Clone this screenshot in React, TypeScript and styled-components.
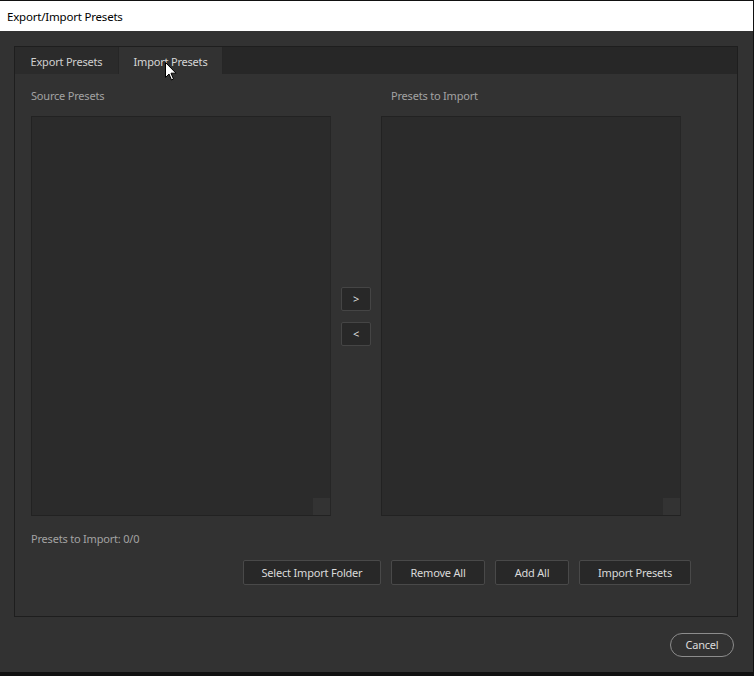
import React from "react";
import styled, { createGlobalStyle } from "styled-components";

const Global = createGlobalStyle`
  html, body { margin: 0; padding: 0; background: #000; }
  body { font-family: "Noto Sans", "Open Sans", sans-serif; }
  * { box-sizing: border-box; }
`;

const uiFont = `
  font-family: "Noto Sans", "Open Sans", sans-serif;
  font-size: 11px;
  letter-spacing: -0.2px;
`;

const Frame = styled.div`
  position: relative;
  width: 754px;
  height: 676px;
  background: #111;
  padding: 1px 1px 4px 0;
  display: flex;
  flex-direction: column;
  overflow: hidden;
`;

const TitleBar = styled.div`
  height: 30px;
  background: #ffffff;
  color: #000;
  ${uiFont}
  font-size: 11.5px;
  display: flex;
  align-items: center;
  padding-left: 7px;
  flex-shrink: 0;
`;

const Body = styled.div`
  flex: 1;
  background: #323232;
  padding: 15px 15px 0 14px;
  display: flex;
  flex-direction: column;
`;

const Panel = styled.div`
  width: 724px;
  height: 571px;
  border: 1px solid #1e1e1e;
  background: #323232;
  display: flex;
  flex-direction: column;
`;

const TabBar = styled.div`
  height: 27px;
  background: #272727;
  display: flex;
  flex-shrink: 0;
`;

const Tab = styled.div<{ $active?: boolean }>`
  width: 104px;
  height: 27px;
  display: flex;
  align-items: center;
  justify-content: center;
  padding-top: 1px;
  ${uiFont}
  color: ${(p) => (p.$active ? "#d6d6d6" : "#cfcfcf")};
  background: ${(p) => (p.$active ? "#323232" : "#2b2b2b")};
  border-right: 1px solid #262626;
`;

const Content = styled.div`
  flex: 1;
  padding: 14px 0 0 16px;
  display: flex;
  flex-direction: column;
`;

const Columns = styled.div`
  display: flex;
  align-items: flex-end;
`;

const Column = styled.div`
  width: 300px;
  display: flex;
  flex-direction: column;
  gap: 12px;
`;

const Label = styled.div<{ $indent?: number }>`
  height: 16px;
  line-height: 16px;
  ${uiFont}
  color: #a3a3a3;
  padding-left: ${(p) => p.$indent ?? 0}px;
`;

const ListBox = styled.div`
  position: relative;
  height: 400px;
  background: #2b2b2b;
  border: 1px solid #222;
  border-right-color: #262626;
`;

const ScrollCorner = styled.div`
  position: absolute;
  right: 0;
  bottom: 0;
  width: 17px;
  height: 17px;
  background: #333333;
`;

const Middle = styled.div`
  width: 50px;
  height: 400px;
  display: flex;
  flex-direction: column;
  align-items: center;
  justify-content: center;
  gap: 11px;
`;

const ArrowButton = styled.button`
  width: 30px;
  height: 24px;
  background: #282828;
  border: 1px solid #454545;
  border-radius: 2px;
  color: #dcdcdc;
  ${uiFont}
  padding: 0;
  display: flex;
  align-items: center;
  justify-content: center;
`;

const Status = styled.div`
  margin-top: 15px;
  height: 16px;
  line-height: 16px;
  ${uiFont}
  color: #a3a3a3;
`;

const ButtonRow = styled.div`
  margin-top: 13px;
  display: flex;
  justify-content: flex-end;
  gap: 10px;
  padding-right: 46px;
`;

const ActionButton = styled.button<{ $w: number }>`
  width: ${(p) => p.$w}px;
  height: 25px;
  background: #282828;
  border: 1px solid #494949;
  border-radius: 2px;
  color: #dadada;
  ${uiFont}
  padding: 0;
`;

const Footer = styled.div`
  display: flex;
  justify-content: flex-end;
  padding-top: 16px;
  padding-right: 4px;
`;

const PillButton = styled.button`
  width: 64px;
  height: 24px;
  background: #323232;
  border: 1px solid #8c8c8c;
  border-radius: 12px;
  color: #dcdcdc;
  ${uiFont}
  padding: 0 0 1px;
`;

const Cursor = styled.svg`
  position: absolute;
  left: 165px;
  top: 62px;
  pointer-events: none;
`;

export default function App() {
  return (
    <>
      <Global />
      <Frame>
        <TitleBar>Export/Import Presets</TitleBar>
        <Body>
          <Panel>
            <TabBar>
              <Tab>Export Presets</Tab>
              <Tab $active>Import Presets</Tab>
            </TabBar>
            <Content>
              <Columns>
                <Column>
                  <Label>Source Presets</Label>
                  <ListBox>
                    <ScrollCorner />
                  </ListBox>
                </Column>
                <Middle>
                  <ArrowButton>&gt;</ArrowButton>
                  <ArrowButton>&lt;</ArrowButton>
                </Middle>
                <Column>
                  <Label $indent={10}>Presets to Import</Label>
                  <ListBox>
                    <ScrollCorner />
                  </ListBox>
                </Column>
              </Columns>
              <Status>Presets to Import: 0/0</Status>
              <ButtonRow>
                <ActionButton $w={138}>Select Import Folder</ActionButton>
                <ActionButton $w={94}>Remove All</ActionButton>
                <ActionButton $w={74}>Add All</ActionButton>
                <ActionButton $w={112}>Import Presets</ActionButton>
              </ButtonRow>
            </Content>
          </Panel>
          <Footer>
            <PillButton>Cancel</PillButton>
          </Footer>
        </Body>
        <Cursor width="12" height="19" viewBox="0 0 12 19">
          <path d="M0.5 0.5 L0.5 15.5 L4 12 L6.5 18 L8.5 17 L6 11.2 L11 11.2 Z" fill="#fff" stroke="#000" strokeWidth="1" />
        </Cursor>
      </Frame>
    </>
  );
}
